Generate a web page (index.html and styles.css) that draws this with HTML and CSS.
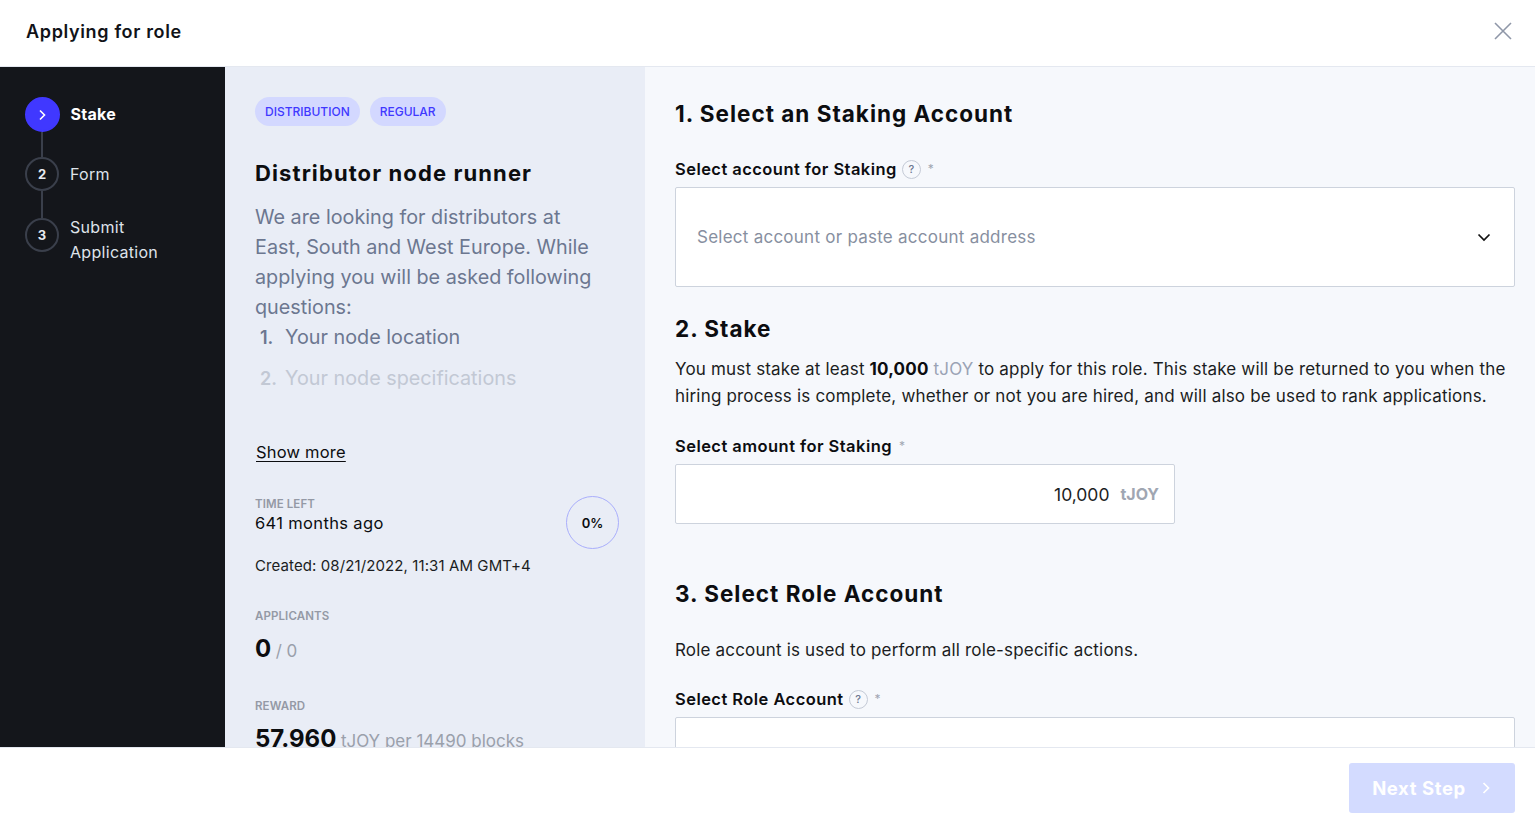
FILE: index.html
```html
<!DOCTYPE html>
<html lang="en">
<head>
<meta charset="utf-8">
<title>Applying for role</title>
<link rel="stylesheet" href="styles.css">
</head>
<body>
<div class="modal">
  <header class="header">
    <h1 class="header-title">Applying for role</h1>
    <button class="close-btn" aria-label="Close">
      <svg width="20" height="20" viewBox="0 0 20 20"><path d="M2 2L18 18M18 2L2 18" stroke="#8f97a8" stroke-width="1.6" fill="none"/></svg>
    </button>
  </header>
  <div class="body">
    <aside class="steps">
      <div class="step step-active">
        <span class="step-circle step-circle-active">
          <svg width="12" height="12" viewBox="0 0 12 12"><path d="M4 1.5L8.5 6L4 10.5" stroke="#fff" stroke-width="1.6" fill="none"/></svg>
        </span>
        <span class="step-label step-label-active">Stake</span>
      </div>
      <div class="step-line"></div>
      <div class="step">
        <span class="step-circle">2</span>
        <span class="step-label">Form</span>
      </div>
      <div class="step-line step-line-long"></div>
      <div class="step step-multi">
        <span class="step-circle">3</span>
        <span class="step-label step-label-multi">Submit<br>Application</span>
      </div>
    </aside>
    <section class="info">
      <div class="tags">
        <span class="tag">DISTRIBUTION</span>
        <span class="tag">REGULAR</span>
      </div>
      <h2 class="info-title">Distributor node runner</h2>
      <div class="desc">
        <p class="desc-text">We are looking for distributors at East, South and West Europe. While applying you will be asked following questions:</p>
        <ol class="desc-list">
          <li class="desc-item"><span class="num">1.</span>Your node location</li>
          <li class="desc-item desc-item-fade"><span class="num">2.</span>Your node specifications</li>
        </ol>
      </div>
      <a class="show-more" href="#">Show more</a>
      <div class="stat-row">
        <div class="stat">
          <div class="stat-label">TIME LEFT</div>
          <div class="stat-value">641 months ago</div>
        </div>
        <div class="progress">0%</div>
      </div>
      <div class="created">Created: 08/21/2022, 11:31 AM GMT+4</div>
      <div class="stat stat-block">
        <div class="stat-label">APPLICANTS</div>
        <div class="stat-big"><span class="big">0</span> <span class="muted">/ 0</span></div>
      </div>
      <div class="stat stat-block">
        <div class="stat-label">REWARD</div>
        <div class="stat-big"><span class="big">57.960</span> <span class="muted">tJOY per 14490 blocks</span></div>
      </div>
    </section>
    <section class="form">
      <h2 class="form-title">1. Select an Staking Account</h2>
      <div class="field-label">Select account for Staking <span class="help">?</span> <span class="req">*</span></div>
      <div class="select">
        <span class="placeholder">Select account or paste account address</span>
        <svg width="16" height="16" viewBox="0 0 16 16"><path d="M2.5 5.5L8 11L13.5 5.5" stroke="#111" stroke-width="1.7" fill="none"/></svg>
      </div>
      <h2 class="form-title form-title-2">2. Stake</h2>
      <p class="form-text">You must stake at least <b>10,000</b> <span class="token">tJOY</span> to apply for this role. This stake will be returned to you when the hiring process is complete, whether or not you are hired, and will also be used to rank applications.</p>
      <div class="field-label field-label-2">Select amount for Staking <span class="req">*</span></div>
      <div class="amount">
        <span class="amount-value">10,000</span>
        <span class="amount-unit">tJOY</span>
      </div>
      <h2 class="form-title form-title-3">3. Select Role Account</h2>
      <p class="form-text form-text-3">Role account is used to perform all role-specific actions.</p>
      <div class="field-label field-label-3">Select Role Account <span class="help">?</span> <span class="req">*</span></div>
      <div class="select select-role"></div>
    </section>
  </div>
  <footer class="footer">
    <button class="next-btn">Next Step
      <svg width="12" height="14" viewBox="0 0 12 14"><path d="M3.5 2L8.5 7L3.5 12" stroke="#fff" stroke-width="1.7" fill="none"/></svg>
    </button>
  </footer>
</div>
</body>
</html>
```

FILE: styles.css
```css
* { box-sizing: border-box; }
html, body { margin: 0; padding: 0; }
body {
  font-family: "Inter", "Noto Sans", sans-serif;
  color: #111318;
  background: #fff;
  width: 1535px;
  height: 826px;
  overflow: hidden;
}
.modal {
  display: flex;
  flex-direction: column;
  height: 826px;
}
.header {
  height: 67px;
  flex: none;
  display: flex;
  align-items: center;
  justify-content: space-between;
  padding: 0 22px 4px 26px;
  border-bottom: 1px solid #e4e8f0;
  background: #fff;
}
.header-title {
  margin: 0;
  font-size: 18px;
  font-weight: 600;
  letter-spacing: 0.65px;
  color: #111318;
}
.close-btn {
  border: 0;
  background: none;
  padding: 0;
  width: 20px;
  height: 20px;
  display: flex;
  cursor: pointer;
}
.body {
  flex: 1;
  display: flex;
  min-height: 0;
  overflow: hidden;
}
/* Steps */
.steps {
  width: 225px;
  flex: none;
  background: #14161b;
  padding: 30px 25px;
  display: flex;
  flex-direction: column;
}
.step {
  display: flex;
  align-items: center;
  gap: 11px;
}
.step-multi { align-items: flex-start; }
.step-circle {
  width: 34px;
  height: 34px;
  border-radius: 50%;
  border: 2px solid #3a3f4b;
  display: flex;
  align-items: center;
  justify-content: center;
  color: #e8eaf0;
  font-size: 13px;
  font-weight: 700;
  flex: none;
}
.step-circle-active {
  width: 35px;
  height: 35px;
  margin-left: -0.5px;
  background: #4038ff;
  border-color: #4038ff;
}
.step-line {
  width: 2px;
  height: 25px;
  margin-left: 16px;
  background: #3a3f4b;
}
.step-line-long { height: 27px; }
.step-label {
  font-size: 16px;
  line-height: 25px;
  color: #dfe3ea;
  letter-spacing: 0.3px;
}
.step-active .step-label { margin-top: -1px; }
.step-label-active {
  color: #fff;
  font-weight: 700;
}
.step-label-multi { margin-top: -3px; }
/* Info panel */
.info {
  width: 420px;
  flex: none;
  background: #e9edf6;
  padding: 30px 26px 0 30px;
  overflow: hidden;
}
.tags {
  display: flex;
  gap: 10px;
}
.tag {
  height: 29px;
  padding: 0 10px;
  border-radius: 15px;
  background: #d3d8ff;
  color: #4038ff;
  font-size: 12px;
  font-weight: 500;
  letter-spacing: 0;
  display: flex;
  align-items: center;
}
.info-title {
  margin: 32px 0 0;
  font-size: 22px;
  line-height: 30px;
  font-weight: 700;
  letter-spacing: 1.1px;
  color: #0c0d10;
}
.desc { margin-top: 14px; }
.desc-text {
  margin: 0;
  width: 350px;
  font-size: 19.8px;
  line-height: 30px;
  color: #6c7790;
}
.desc-list {
  list-style: none;
  margin: 0;
  padding: 0 0 0 5px;
}
.desc-item {
  font-size: 19.8px;
  line-height: 30px;
  color: #6c7790;
  margin-bottom: 10px;
}
.desc-item-fade { color: #c2c8d4; }
.num {
  display: inline-block;
  width: 25px;
  font-weight: 600;
  font-size: 18px;
}
.show-more {
  display: inline-block;
  margin-top: 37px;
  font-size: 16.5px;
  line-height: 22px;
  letter-spacing: 0.2px;
  color: #0c0d10;
  text-decoration: underline;
  text-underline-offset: 3px;
  padding-left: 1px;
}
.stat-row {
  display: flex;
  justify-content: space-between;
  align-items: flex-start;
  margin-top: 33px;
}
.stat-label {
  font-size: 11.5px;
  font-weight: 600;
  color: #9499a5;
  line-height: 16px;
  letter-spacing: 0.1px;
}
.stat-value {
  font-size: 16.5px;
  line-height: 22px;
  letter-spacing: 0.35px;
  color: #0c0d10;
}
.progress {
  width: 53px;
  height: 53px;
  border-radius: 50%;
  border: 1px solid #a9aefc;
  display: flex;
  align-items: center;
  justify-content: center;
  font-size: 13px;
  font-weight: 600;
  color: #0c0d10;
}
.created {
  margin-top: 7px;
  font-size: 15px;
  line-height: 20px;
  letter-spacing: 0.1px;
  color: #1b1d22;
}
.stat-block { margin-top: 32px; }
.stat-big {
  margin-top: 10px;
  line-height: 30px;
}
.big {
  font-size: 24px;
  font-weight: 700;
  color: #0c0d10;
}
.muted {
  font-size: 17px;
  color: #9aa0ab;
}
/* Form panel */
.form {
  flex: 1;
  background: #f6f8fc;
  padding: 30px 20px 0 30px;
  overflow: hidden;
}
.form-title {
  margin: 0;
  font-size: 22.5px;
  line-height: 34px;
  font-weight: 700;
  letter-spacing: 1px;
  color: #0c0d10;
}
.field-label {
  margin-top: 27px;
  display: flex;
  align-items: center;
  font-size: 16.5px;
  font-weight: 600;
  line-height: 22px;
  letter-spacing: 0.45px;
  color: #0c0d10;
}
.help {
  display: inline-flex;
  width: 19px;
  height: 19px;
  border-radius: 50%;
  border: 1px solid #c4cad6;
  align-items: center;
  justify-content: center;
  font-size: 11px;
  font-weight: 500;
  letter-spacing: 0;
  color: #6c7790;
  margin-left: 5px;
  background: #f6f8fc;
}
.req {
  margin-left: 7px;
  color: #a0a6b2;
  font-size: 12px;
  font-weight: 400;
}
.select {
  margin-top: 7px;
  height: 100px;
  background: #fff;
  border: 1px solid #cdd3dd;
  border-radius: 2px;
  display: flex;
  align-items: center;
  justify-content: space-between;
  padding: 0 22px 0 21px;
}
.placeholder {
  font-size: 17px;
  letter-spacing: 0.25px;
  color: #878fa0;
}
.form-title-2 { margin-top: 25px; }
.form-text {
  margin: 10px 0 0;
  font-size: 17px;
  line-height: 27px;
  letter-spacing: 0.18px;
  color: #1b1d22;
}
.form-text b { font-weight: 700; color: #0c0d10; }
.token { color: #9aa3b5; }
.field-label-2 { margin-top: 25px; }
.amount {
  margin-top: 7px;
  width: 500px;
  height: 60px;
  background: #fff;
  border: 1px solid #cdd3dd;
  border-radius: 2px;
  display: flex;
  align-items: center;
  justify-content: flex-end;
  gap: 11px;
  padding: 0 15px;
}
.amount-value {
  font-size: 17.5px;
  color: #1b1d22;
}
.amount-unit {
  font-size: 16px;
  font-weight: 700;
  color: #a0a6b2;
}
.form-title-3 { margin-top: 53px; }
.form-text-3 { margin-top: 26px; }
.field-label-3 { margin-top: 24px; }
.select-role { height: 60px; }
/* Footer */
.footer {
  height: 79px;
  flex: none;
  background: #fff;
  border-top: 1px solid #e4e8f0;
  display: flex;
  align-items: center;
  justify-content: flex-end;
  padding: 2px 20px 0 0;
}
.next-btn {
  width: 166px;
  height: 50px;
  border: 0;
  border-radius: 3px;
  background: #d3dbff;
  color: #fff;
  font-family: "Inter", "Noto Sans", sans-serif;
  font-size: 18.5px;
  font-weight: 700;
  letter-spacing: 0.6px;
  display: flex;
  align-items: center;
  justify-content: center;
  gap: 14px;
}
```
